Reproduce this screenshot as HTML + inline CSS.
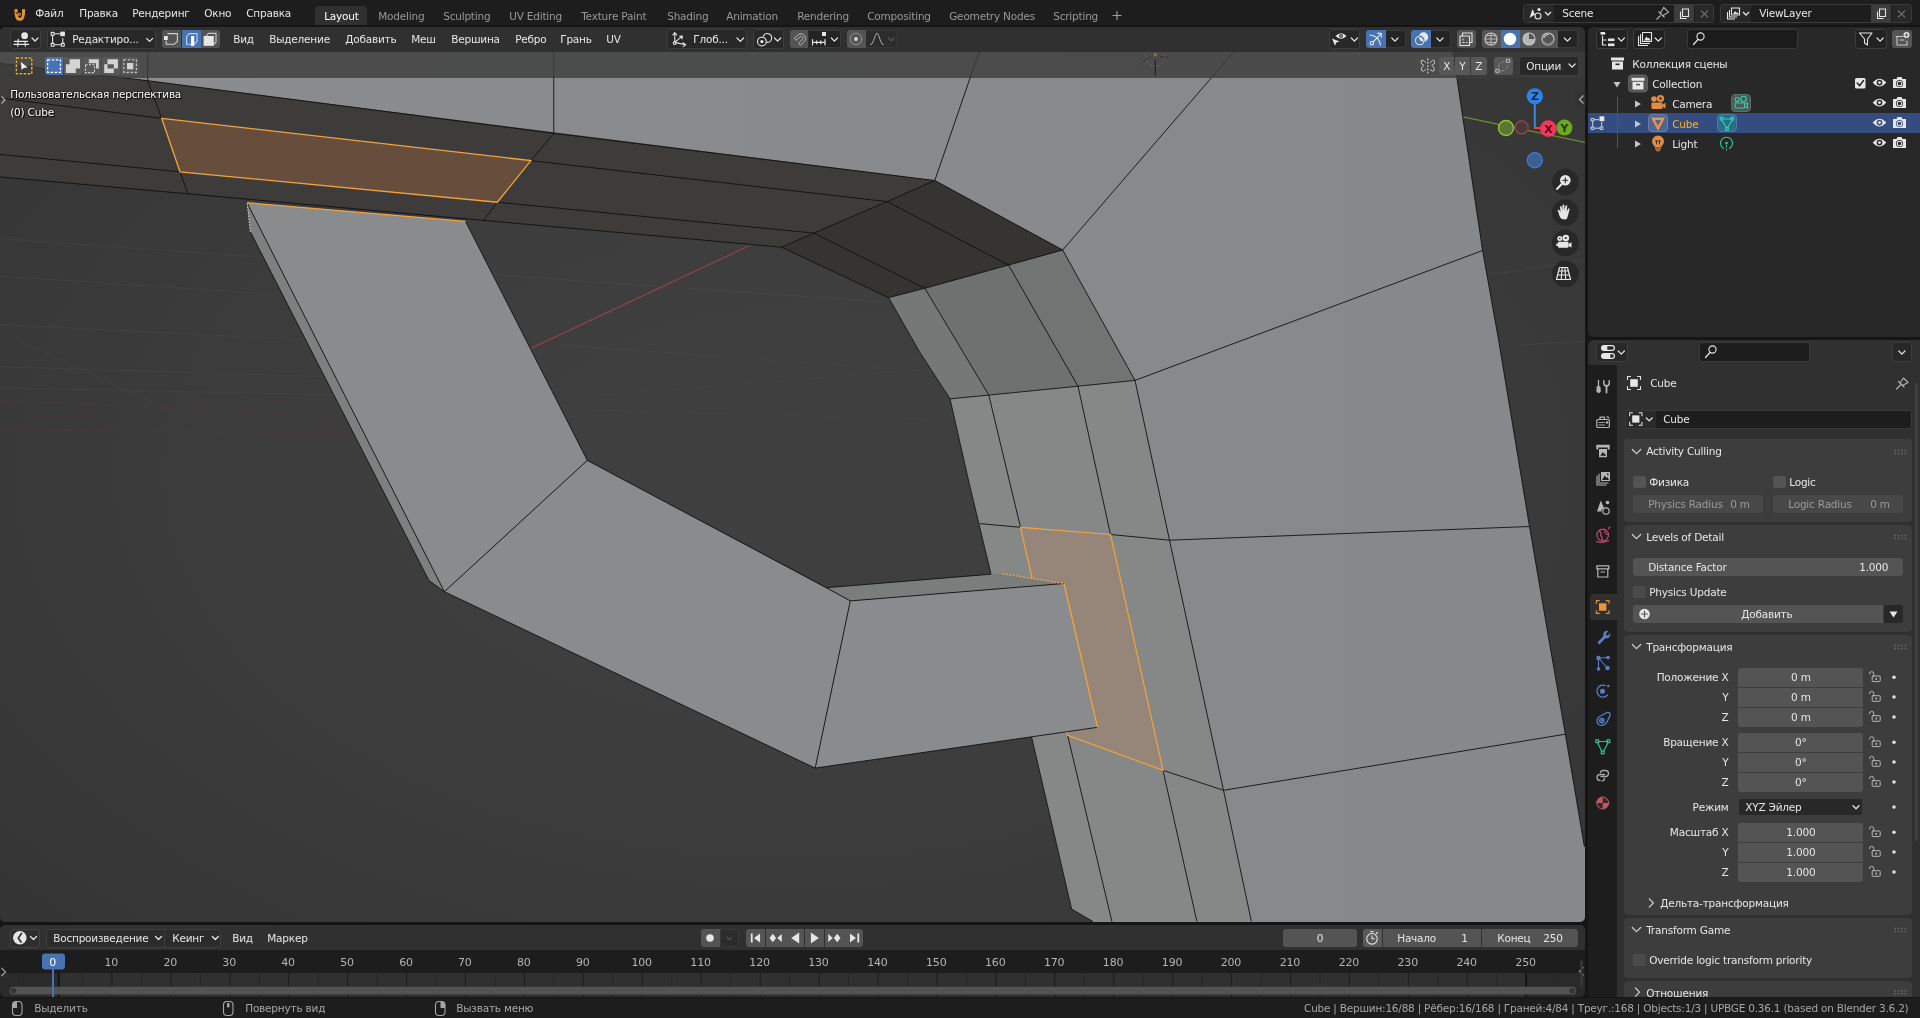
<!DOCTYPE html>
<html lang="ru">
<head>
<meta charset="utf-8">
<title>UPBGE</title>
<style>
*{box-sizing:border-box;margin:0;padding:0}
html,body{width:1920px;height:1018px;overflow:hidden;background:#151515}
body{font-family:"DejaVu Sans","Liberation Sans",sans-serif;font-size:10.5px;letter-spacing:-0.2px;color:#e6e6e6;position:relative;line-height:1}
.a{position:absolute}
.t{position:absolute;white-space:nowrap;line-height:14px;height:14px;padding-left:0.7px}
.dim{color:#989898}
.b{position:absolute;border-radius:3px}
svg{position:absolute;left:0;top:0;overflow:visible}
</style>
</head>
<body>
<div id="root" style="position:absolute;left:0;top:0;width:1920px;height:1018px;will-change:transform">
<svg width="1920" height="1018" viewBox="0 0 1920 1018">
<defs>
<clipPath id="vp"><rect x="0" y="28" width="1585" height="894" rx="5" ry="5"/></clipPath>
<radialGradient id="bgv" gradientUnits="userSpaceOnUse" cx="792" cy="475" r="1" gradientTransform="translate(792,475) scale(1050,640) translate(-792,-475)"><stop offset="0" stop-color="#404040"/><stop offset="0.5" stop-color="#3d3d3d"/><stop offset="1" stop-color="#353535"/></radialGradient>
<linearGradient id="lg" x1="0" y1="0" x2="1" y2="0"><stop offset="0" stop-color="#8b8c8d"/><stop offset="1" stop-color="#87888a"/></linearGradient>
</defs>
<g clip-path="url(#vp)">
<rect x="0" y="28" width="1585" height="894" fill="url(#bgv)"/>
<!-- faint grid -->
<g stroke="#454545" stroke-width="1" fill="none" opacity="0.7">
<path d="M0 238.700 L259 257 L300 260"/><path d="M0 276 L360 300"/><path d="M0 324.500 L309 340"/><path d="M0 366.700 L323 376.600"/><path d="M0 387.800 L337 394.800"/><path d="M17 340 L225 435.600"/>
<path d="M470 273.200 L885 302"/><path d="M560 345 L935 372"/><path d="M600 395 L948 368"/><path d="M590 410 L955 420"/>
<path d="M1489 275 L1585 260"/><path d="M1520 345 L1585 341"/><path d="M1560 905 L1585 902"/>
</g>
<g stroke="#4a3a3e" stroke-width="1" fill="none" opacity="0.7"><path d="M0 400 L351 418"/><path d="M0 430 L351 432.800"/><path d="M380 395 L345 410"/></g>
<!-- mid gray face behind top-left -->
<!-- main body -->
<polygon points="0,28 0,63.3 147.7,80.7 934.8,180.5 1062.7,250 1008.5,265 924.8,288.3 888.6,297.6 919,351 950,398.8 968.4,480 991,574.2 1031.6,737 1071.6,909 1092.9,921.5 1092.9,930 1590,930 1590,846.7 1584.4,846.7 1565.4,734.2 1549,640 1529.5,526.5 1498.6,340 1482.6,250.5 1456.8,77.2 1449.5,28" fill="url(#lg)"/>
<!-- mid gray bevel quads -->
<polygon points="888.6,297.6 924.8,288.3 988.8,395.1 950,398.8 919,351" fill="#767777"/>
<polygon points="924.8,288.3 1008.5,265 1040,320 1078,386.2 988.8,395.1" fill="#6f7070"/>
<polygon points="1008.5,265 1062.7,250 1135,380.4 1078,386.2 1040,320" fill="#727373"/>
<!-- lower strips slight tint -->
<polygon points="950,398.8 1135,380.4 1169.5,540.2 1223.5,790.3 1251.4,921.5 1092.9,921.5 1071.6,909 1031.6,737 991,574.2 968.4,480" fill="#868888"/>
<!-- dark band -->
<polygon points="0,63.3 147.7,80.7 553.75,133.3 934.8,180.5 887,201.6 813.9,233.1 781.6,247.2 187.9,193.8 0,176.9" fill="#3d3c3a"/>
<!-- dark corner -->
<polygon points="934.8,180.5 1062.7,250 1008.5,265 924.8,288.3 888.6,297.6 781.6,247.2 813.9,233.1 887,201.6" fill="#353433"/>
<!-- red X axis -->
<line x1="750.6" y1="245" x2="531" y2="348.4" stroke="#8e3f4c" stroke-width="1.3"/>
<!-- green Y axis -->
<line x1="1463" y1="116.900" x2="1585" y2="142.400" stroke="#6b8f2b" stroke-width="1.3"/>
<!-- selected face top -->
<polygon points="161.7,118.4 530.9,160.6 497.3,202.2 180,171.8" fill="#664d3c"/>
<!-- band edges -->
<g stroke="#111" stroke-width="0.9" fill="none" stroke-linejoin="round">
<path d="M0 63.3 L147.7 80.7 L553.75 133.3 L934.8 180.5"/>
<path d="M0 98.1 L161.7 118.4"/><path d="M530.9 160.6 L887 201.6"/>
<path d="M0 154.4 L180 171.8"/><path d="M497.3 202.2 L813.9 233.1"/>
<path d="M0 176.9 L187.9 193.8 L781.6 247.2"/>
<path d="M147.7 28 L147.7 80.7 L161.7 118.4"/><path d="M180 171.8 L187.9 193.8"/>
<path d="M553.75 28 L553.75 133.3 L530.9 160.6"/><path d="M497.3 202.2 L483.3 220.8"/>
<path d="M934.8 180.5 L887 201.6 L813.9 233.1 L781.6 247.2"/>
<path d="M934.8 180.5 L972.8 70 L988 28"/>
<path d="M934.8 180.5 L1062.7 250 L1211.9 77.2 L1254.4 28"/>
<path d="M887 201.6 L1008.5 265"/><path d="M813.9 233.1 L924.8 288.3"/><path d="M781.6 247.2 L888.6 297.6"/>
<path d="M888.6 297.6 L924.8 288.3 L1008.5 265 L1062.7 250"/>
<path d="M888.6 297.6 L919 351 L950 398.8 L968.4 480 L991 574.2"/>
<path d="M924.8 288.3 L988.8 395.1 L1020.5 527.3"/>
<path d="M1008.5 265 L1040 320 L1078 386.2 L1110.5 534.5"/>
<path d="M1062.7 250 L1135 380.4 L1169.5 540.2 L1223.5 790.3 L1251.4 921.5"/>
<path d="M950 398.8 L988.8 395.1 L1078 386.2 L1135 380.4 L1482.6 250.5"/>
<path d="M979.7 523.6 L1020.5 527.3"/><path d="M1110.5 534.5 L1169.5 540.2 L1529.5 526.5"/>
<path d="M1163 770.3 L1223.5 790.3 L1565.4 734.2"/>
<path d="M1163 770.3 L1196.9 921.5"/><path d="M1067.6 735.2 L1111.9 921.5"/>
<path d="M1031.6 737 L1071.6 909 L1092.9 921.5"/>
<path d="M1449.5 28 L1456.8 77.2 L1482.6 250.5 L1498.6 340 L1529.5 526.5 L1549 640 L1565.4 734.2 L1584.4 846.7"/>
</g>
<!-- selected face lower -->
<polygon points="1020.5,527.3 1110.5,534.5 1163,770.3 1067.6,735.2" fill="#958679" stroke="#f2a43a" stroke-width="1.200"/>
<!-- plank 1 -->
<polygon points="247,202.7 250.3,231.7 428.9,580.5 444.4,591.7" fill="#7e7f7f"/>
<polygon points="247,202.7 465.5,221.3 587.3,460.4 444.4,591.7" fill="#8a8b8c"/>
<!-- plank 2 -->
<polygon points="444.4,591.7 587.3,460.4 850.3,600.9 815.2,768.1" fill="#8a8b8c"/>
<!-- plank 3 -->
<polygon points="826.4,587.7 991,574.2 1002.2,573.7 1064,583.5 850.3,600.9" fill="#7b7c7c"/>
<polygon points="850.3,600.9 1064,583.5 1097.5,727.3 815.2,768.1" fill="#8a8b8c"/>
<g stroke="#111" stroke-width="0.9" fill="none" stroke-linejoin="round">
<path d="M250.3 231.7 L428.9 580.5 L444.4 591.7 L815.2 768.1 L1097.5 727.3"/>
<path d="M247 202.7 L444.4 591.7 L587.3 460.4 L465.5 221.3"/>
<path d="M587.3 460.4 L826.4 587.7 L850.3 600.9 L815.2 768.1"/>
<path d="M826.4 587.7 L991 574.2"/><path d="M850.3 600.9 L1064 583.5"/>
</g>
<g stroke="#f2a43a" stroke-width="1.300" fill="none">
<polygon points="161.7,118.4 530.9,160.6 497.3,202.2 180,171.8"/>
<path d="M247 202.7 L465.5 221.3"/>
<path d="M1064 583.5 L1097.5 727.3"/>
<path d="M1002.2 573.7 L1064 583.5" stroke-dasharray="2 1.5"/>
</g>
<path d="M247.3 203.5 L250.3 231.7" stroke="#ddd" stroke-width="1" stroke-dasharray="1.5 1.5"/>
</g>
</svg>

<div class="a" style="left:0;top:0;width:1920px;height:25px;background:#1d1d1d"></div>
<svg width="40" height="28" viewBox="0 0 40 28"><path d="M15.900 9.200 L16.300 14.500 Q16.800 19.300 19.800 19.300 Q22.800 19.300 23.300 14.500 L23.700 9.200" stroke="#e8912e" stroke-width="3.100" fill="none" stroke-linecap="butt"/><path d="M15 12.300 L18 14.800 L19.300 17.800 L21.800 16.500 L21.300 11.500 L19 13" fill="#1d1d1d"/><circle cx="19.300" cy="14.300" r="1.500" fill="#e8a050"/><circle cx="19.300" cy="14.300" r="0.600" fill="#1d1d1d"/></svg>
<div class="t" style="left:34.5px;top:6px">Файл</div>
<div class="t" style="left:78.5px;top:6px">Правка</div>
<div class="t" style="left:131.5px;top:6px">Рендеринг</div>
<div class="t" style="left:203.5px;top:6px">Окно</div>
<div class="t" style="left:245.5px;top:6px">Справка</div>
<div class="a" style="left:315px;top:6px;width:52px;height:19px;background:#303030;border-radius:4px 4px 0 0"></div>
<div class="t" style="left:323.5px;top:9px;color:#fff">Layout</div>
<div class="t dim" style="left:377.5px;top:9px">Modeling</div>
<div class="t dim" style="left:442.5px;top:9px">Sculpting</div>
<div class="t dim" style="left:508.5px;top:9px">UV Editing</div>
<div class="t dim" style="left:580.5px;top:9px">Texture Paint</div>
<div class="t dim" style="left:666.5px;top:9px">Shading</div>
<div class="t dim" style="left:725.5px;top:9px">Animation</div>
<div class="t dim" style="left:796.5px;top:9px">Rendering</div>
<div class="t dim" style="left:866.5px;top:9px">Compositing</div>
<div class="t dim" style="left:948.5px;top:9px">Geometry Nodes</div>
<div class="t dim" style="left:1052.5px;top:9px">Scripting</div>
<svg width="1920" height="28" viewBox="0 0 1920 28"><path d="M1112.5 15.5 H1121.5 M1117 11 V20" stroke="#a0a0a0" stroke-width="1.1" fill="none"/></svg>
<!-- scene selector -->
<div class="b" style="left:1523px;top:4px;width:191px;height:19px;background:#1d1d1d;border:1px solid #3a3a3a"></div>
<div class="a" style="left:1524px;top:5px;width:30px;height:17px;background:#282828;border-radius:3px 0 0 3px"></div>
<div class="a" style="left:1674px;top:5px;width:20px;height:17px;background:#3d3d3d"></div>
<div class="a" style="left:1695px;top:5px;width:18px;height:17px;background:#282828;border-radius:0 3px 3px 0"></div>
<div class="t" style="left:1561.5px;top:6px">Scene</div>
<div class="b" style="left:1720px;top:4px;width:192px;height:19px;background:#1d1d1d;border:1px solid #3a3a3a"></div>
<div class="a" style="left:1721px;top:5px;width:30px;height:17px;background:#282828;border-radius:3px 0 0 3px"></div>
<div class="a" style="left:1871px;top:5px;width:20px;height:17px;background:#3d3d3d"></div>
<div class="a" style="left:1892px;top:5px;width:19px;height:17px;background:#282828;border-radius:0 3px 3px 0"></div>
<div class="t" style="left:1758.5px;top:6px">ViewLayer</div>
<svg width="1920" height="28" viewBox="0 0 1920 28" fill="none" stroke="#e6e6e6" stroke-width="1.1">
<!-- scene icon -->
<path d="M1529.5 18 L1532.5 9 L1535 14.5 Z" fill="#e6e6e6" stroke="none"/><circle cx="1538" cy="16" r="3"/><circle cx="1539" cy="9.5" r="1.6" fill="#e6e6e6" stroke="none"/>
<path d="M1545 12 L1548 15 L1551 12" stroke-width="1.3"/>
<!-- pin -->
<path d="M1656.500 19.500 L1660.500 15.500 M1658.500 11.500 L1664.500 17.500 M1660.300 13.300 L1663.800 7.500 L1668.500 12.200 L1662.700 15.700" stroke="#b0b0b0"/>
<!-- new scene -->
<path d="M1680.5 11.5 V18.5 H1686.5 M1682.5 9 H1688.5 V16.5 H1682.5 Z" stroke="#e6e6e6"/>
<path d="M1701 10.5 L1708 17.5 M1708 10.5 L1701 17.5" stroke="#6a6a6a" stroke-width="1.3"/>
<!-- view layer icon -->
<path d="M1727.5 12 V19 H1735 M1729.5 10 V17 H1737 M1731.5 8 H1739.5 V15 H1731.5 Z"/><path d="M1733 14 L1735 11 L1736.5 13 L1737.5 12 L1738.5 14 Z" fill="#e6e6e6" stroke="none"/>
<path d="M1743 12 L1746 15 L1749 12" stroke-width="1.3"/>
<path d="M1877.5 11.5 V18.5 H1883.5 M1879.5 9 H1885.5 V16.5 H1879.5 Z" stroke="#e6e6e6"/>
<path d="M1898 10.5 L1905 17.5 M1905 10.5 L1898 17.5" stroke="#6a6a6a" stroke-width="1.3"/>
</svg>

<!-- viewport header row -->
<div class="a" style="left:0;top:27px;width:1585px;height:25px;background:#303030;border-radius:5px 5px 0 0"></div>
<!-- tool settings row (translucent) -->
<div class="a" style="left:0;top:52px;width:1585px;height:26px;background:rgba(60,60,60,0.8)"></div>
<!-- editor type -->
<div class="b" style="left:9.500px;top:29px;width:31px;height:20px;background:#2a2a2a;border:1px solid #3f3f3f"></div>
<!-- mode -->
<div class="b" style="left:47px;top:29px;width:109px;height:20px;background:#282828;border:1px solid #3d3d3d"></div>
<div class="t" style="left:71.5px;top:32px">Редактиро...</div>
<!-- select modes -->
<div class="a" style="left:162px;top:30px;width:19px;height:18px;background:#545454;border-radius:3px 0 0 3px"></div>
<div class="a" style="left:181.5px;top:30px;width:19px;height:18px;background:#4772b3"></div>
<div class="a" style="left:201px;top:30px;width:19px;height:18px;background:#545454;border-radius:0 3px 3px 0"></div>
<div class="t" style="left:232.5px;top:32px">Вид</div>
<div class="t" style="left:268.5px;top:32px">Выделение</div>
<div class="t" style="left:344.5px;top:32px">Добавить</div>
<div class="t" style="left:410.5px;top:32px">Меш</div>
<div class="t" style="left:450.5px;top:32px">Вершина</div>
<div class="t" style="left:514.5px;top:32px">Ребро</div>
<div class="t" style="left:559.5px;top:32px">Грань</div>
<div class="t" style="left:605.5px;top:32px">UV</div>
<!-- orientation -->
<div class="b" style="left:667px;top:29px;width:80px;height:20px;background:#282828;border:1px solid #3d3d3d"></div>
<div class="t" style="left:692.5px;top:32px">Глоб...</div>
<!-- pivot -->
<div class="b" style="left:753px;top:29px;width:31px;height:20px;background:#282828;border:1px solid #3d3d3d"></div>
<!-- snap -->
<div class="a" style="left:790px;top:30px;width:18px;height:18px;background:#545454;border-radius:3px 0 0 3px"></div>
<div class="a" style="left:808.500px;top:30px;width:32px;height:18px;background:#242424;border:1px solid #3a3a3a;border-left:none;border-radius:0 3px 3px 0"></div>
<!-- proportional -->
<div class="a" style="left:847px;top:30px;width:19px;height:18px;background:#545454;border-radius:3px 0 0 3px"></div>
<div class="a" style="left:866px;top:30px;width:31px;height:18px;background:#2c2c2c;border:1px solid #363636;border-left:none;border-radius:0 3px 3px 0"></div>
<!-- right side -->
<div class="b" style="left:1329px;top:29px;width:31px;height:20px;background:#282828;border:1px solid #3d3d3d"></div>
<div class="a" style="left:1366px;top:30px;width:20px;height:18px;background:#4772b3;border-radius:3px 0 0 3px"></div>
<div class="a" style="left:1386px;top:30px;width:19.500px;height:18px;background:#242424;border:1px solid #3a3a3a;border-left:none;border-radius:0 3px 3px 0"></div>
<div class="a" style="left:1411px;top:30px;width:20px;height:18px;background:#4772b3;border-radius:3px 0 0 3px"></div>
<div class="a" style="left:1431px;top:30px;width:19.500px;height:18px;background:#242424;border:1px solid #3a3a3a;border-left:none;border-radius:0 3px 3px 0"></div>
<div class="b" style="left:1457px;top:30px;width:19px;height:18px;background:#545454"></div>
<div class="a" style="left:1482px;top:30px;width:18.5px;height:18px;background:#545454;border-radius:3px 0 0 3px"></div>
<div class="a" style="left:1501px;top:30px;width:18.5px;height:18px;background:#4772b3"></div>
<div class="a" style="left:1520px;top:30px;width:18.5px;height:18px;background:#545454"></div>
<div class="a" style="left:1539px;top:30px;width:18.500px;height:18px;background:#545454"></div>
<div class="a" style="left:1557.500px;top:30px;width:20px;height:18px;background:#242424;border:1px solid #3a3a3a;border-left:none;border-radius:0 3px 3px 0"></div>
<!-- tool row buttons -->
<div class="a" style="left:44.5px;top:57px;width:18.5px;height:17.5px;background:#4772b3;border-radius:3px 0 0 3px"></div>
<div class="a" style="left:63.5px;top:57px;width:18.5px;height:17.5px;background:#585858"></div>
<div class="a" style="left:82.5px;top:57px;width:18.5px;height:17.5px;background:#585858"></div>
<div class="a" style="left:101.5px;top:57px;width:18.5px;height:17.5px;background:#585858"></div>
<div class="a" style="left:120.5px;top:57px;width:18.5px;height:17.5px;background:#585858;border-radius:0 3px 3px 0"></div>
<div class="a" style="left:1438.5px;top:57px;width:15.5px;height:18px;background:#585858;border-radius:3px 0 0 3px"></div>
<div class="a" style="left:1454.5px;top:57px;width:15.5px;height:18px;background:#585858"></div>
<div class="a" style="left:1470.5px;top:57px;width:16px;height:18px;background:#585858;border-radius:0 3px 3px 0"></div>
<div class="t" style="left:1442.5px;top:59px">X</div>
<div class="t" style="left:1458.5px;top:59px">Y</div>
<div class="t" style="left:1474.5px;top:59px">Z</div>
<div class="b" style="left:1493.5px;top:57px;width:19px;height:18px;background:#585858"></div>
<div class="b" style="left:1518.5px;top:56px;width:60px;height:20px;background:#282828;border:1px solid #3d3d3d"></div>
<div class="t" style="left:1525.5px;top:59px">Опции</div>
<svg width="1600" height="300" viewBox="0 0 1600 300" fill="none">
<g font-family="DejaVu Sans, Liberation Sans, sans-serif" font-weight="bold" font-size="11px" text-anchor="middle">
<circle cx="1506" cy="128" r="7.500" fill="#5c7434" stroke="#8fc62c" stroke-width="1.400"/>
<circle cx="1521.700" cy="127.400" r="6.500" fill="#4a393c" stroke="#a8424f" stroke-width="1.200"/>
<circle cx="1534.800" cy="160.300" r="7.500" fill="#3c5e90" stroke="#3b7bd6" stroke-width="1.400"/>
<path d="M1534.800 104 V128" stroke="#3a86e2" stroke-width="2"/>
<path d="M1534 128 H1541" stroke="#f03a58" stroke-width="2"/>
<circle cx="1534.800" cy="96.300" r="8.100" fill="#2f83e6"/>
<text x="1534.800" y="100.300" fill="#0d2a4a">Z</text>
<circle cx="1564.400" cy="127.600" r="8" fill="#6da81e"/>
<text x="1564.400" y="131.600" fill="#1e3a06">Y</text>
<circle cx="1548.300" cy="128.600" r="8.300" fill="#f5365a"/>
<text x="1548.300" y="132.600" fill="#4a0a18">X</text>
</g>
<!-- nav buttons -->
<g fill="#262626" opacity="0.85"><circle cx="1565.400" cy="182" r="13.300"/><circle cx="1565.400" cy="212.500" r="13.300"/><circle cx="1565.400" cy="243" r="13.300"/><circle cx="1565.400" cy="273.800" r="13.300"/></g>
<g stroke="#e6e6e6" stroke-width="1.500" stroke-linecap="round" stroke-linejoin="round">
<circle cx="1565.300" cy="180.300" r="5.300" fill="#e6e6e6" stroke="none"/><path d="M1561.500 184.300 L1557 189"  stroke-width="2"/><path d="M1562.800 180.300 H1567.800 M1565.300 177.800 V182.800" stroke="#262626" stroke-width="1.100"/>
<path d="M1558.500 212.500 Q1557 210 1558 209.500 Q1559.500 209.500 1560.500 212 L1560 206.500 Q1560.800 205.300 1561.600 206.500 L1562.300 210.500 L1562.500 205 Q1563.400 203.800 1564.300 205 L1564.500 210.500 L1565.500 205.800 Q1566.500 204.800 1567.200 206 L1566.700 211.500 L1568.300 208.500 Q1569.500 208 1569.600 209.300 L1568 215.500 Q1567 219.500 1565.400 219.500 Q1560.500 219.500 1559.500 216 Z" fill="#e6e6e6" stroke="none"/>
<g fill="#e6e6e6" stroke="none"><circle cx="1559.800" cy="238.500" r="2.500"/><circle cx="1565.800" cy="238" r="3.300"/><rect x="1558" y="241.800" width="10.500" height="6" rx="1"/><path d="M1568.500 244 L1571.500 242.300 V247.500 L1568.500 246 Z"/><path d="M1556.300 243.500 H1558 V246 H1556.300 Z"/></g><circle cx="1559.800" cy="238.500" r="0.800" fill="#262626" stroke="none"/><circle cx="1565.800" cy="238" r="1.100" fill="#262626" stroke="none"/>
<path d="M1559.500 267.500 H1567.500 L1570.500 279.500 H1556.500 Z M1558.800 271 H1568.300 M1557.800 275 H1569.300 M1562.200 267.500 L1561.200 279.500 M1564.800 267.500 L1565.800 279.500" stroke-width="1.200"/>
</g>
<rect x="1575" y="91" width="11" height="17" rx="3" fill="#303030" opacity="0.500"/>
<path d="M1583.500 95.500 L1579.500 99.500 L1583.500 103.500" stroke="#b0b0b0" stroke-width="1.200"/>
<path d="M1.500 110.500 L5 114 L1.500 117.500" stroke="#b0b0b0" stroke-width="1.200" transform="translate(0,-14)"/>
</svg>

<!-- overlay text -->
<div class="t" style="left:9.5px;top:87px;color:#fff;text-shadow:0 0 2px #000,1px 1px 1px #000">Пользовательская перспектива</div>
<div class="t" style="left:9.5px;top:105px;color:#fff;text-shadow:0 0 2px #000,1px 1px 1px #000">(0) Cube</div>
<svg width="1920" height="80" viewBox="0 0 1920 80" fill="none" stroke="#e6e6e6" stroke-width="1.1" stroke-linecap="round" stroke-linejoin="round">
<!-- editor type -->
<circle cx="24.6" cy="35.7" r="3.4" fill="#e6e6e6" stroke="none"/>
<path d="M14.400 41.300 H27.600 M13.800 44.300 H28.700 M18.300 39.200 L17.700 46.200 M25 41.600 L25.400 46.200" stroke-width="1.150"/>
<path d="M32 38 L35 41 L38 38" stroke-width="1.2"/>
<!-- mode icon -->
<path d="M52.6 35.5 V43 M54.6 33.8 H60 M54.6 44.8 H61 M62.8 38.5 V43"/>
<rect x="51.2" y="32.4" width="2.8" height="2.8"/><rect x="51.2" y="43.4" width="2.8" height="2.8"/><rect x="61.4" y="43.4" width="2.8" height="2.8"/>
<rect x="60.3" y="31.6" width="4.6" height="4.6" fill="#e6e6e6" stroke="none"/>
<path d="M146.5 38.3 L149.6 41.4 L152.7 38.3" stroke-width="1.2"/>
<!-- select modes -->
<path d="M167.8 33.6 H177.4 V41.4 L174.3 44.2 H166.2 V41" stroke="#d0d0d0"/><rect x="164" y="36" width="3.8" height="4" fill="#e6e6e6" stroke="none"/>
<path d="M191 44.2 H186.6 V36.5 L189.3 33.6 H197 V41.4 L194.4 44.2" stroke="#bcd4f5"/><rect x="191" y="36" width="3.2" height="10" fill="#fff" stroke="none"/>
<path d="M207 36 V34.6 L208.5 33.4 H216 V42 L214 44" stroke="#c8c8c8"/><rect x="203.6" y="36" width="10.2" height="9.8" fill="#e6e6e6" stroke="none"/>
<!-- orientation -->
<path d="M674.8 41.5 V33 M672.8 35 L674.8 32.6 L676.8 35 M675.8 42.6 L685.5 44.8 M683 42.8 L685.8 44.9 L683.2 46.6 M675.6 41.6 L682 36.4 M679.5 36.3 L682.4 36 L682 38.8"/>
<circle cx="674.7" cy="43" r="1.4"/>
<path d="M737 38 L740.3 41.3 L743.6 38" stroke-width="1.2"/>
<!-- pivot -->
<circle cx="761.9" cy="41.6" r="4.4"/><circle cx="761.9" cy="41.6" r="1.6" fill="#e6e6e6" stroke="none"/>
<path d="M763.2 36.2 A4.4 4.4 0 1 1 767 42.4"/>
<path d="M774.5 38 L777.6 41.1 L780.7 38" stroke-width="1.2"/>
<!-- magnet -->
<path d="M794.5 38 L799 34.2 A4.6 4.6 0 0 1 804.4 41.4 L800.5 45.3 L798.6 43.2 L802.2 39.7 A1.8 1.8 0 0 0 800.5 36.6 L796.4 40 Z" stroke="#c0c0c0" stroke-width="0.9"/>
<!-- snap increment -->
<path d="M812.5 39.5 V45 M825 39.5 V45 M812.5 42.3 H825 M816.7 40.8 V43.8 M820.8 40.8 V43.8" stroke-width="1.2"/>
<rect x="822" y="32" width="4" height="4" fill="#e6e6e6" stroke="none"/>
<path d="M831.3 38 L834.4 41.1 L837.5 38" stroke-width="1.2"/>
<!-- proportional -->
<circle cx="856" cy="39" r="5.8" stroke="#9a9a9a" stroke-width="0.9"/><circle cx="856" cy="39" r="1.9" fill="#d8d8d8" stroke="none"/>
<path d="M870.5 44.5 C874 44.5 874.5 33.5 877 33.5 C879.5 33.5 880 44.5 883.5 44.5" stroke="#a0a0a0"/>
<path d="M888.5 38 L891.3 40.8 L894.1 38" stroke="#555" stroke-width="1.3"/>
<!-- visibility -->
<path d="M1335.5 36 Q1341 30.5 1346.500 36 Q1341 41.500 1335.500 36 Z" fill="#e6e6e6" stroke="none"/><circle cx="1341" cy="35.800" r="1.9" fill="#282828" stroke="none"/><circle cx="1341" cy="35.800" r="0.800" fill="#e6e6e6" stroke="none"/>
<path d="M1332 38.500 L1339.500 41.500 L1336.300 42.600 L1335 45.800 Z" fill="#e6e6e6" stroke="none"/>
<path d="M1351.300 38 L1354.400 41.100 L1357.500 38" stroke-width="1.2"/>
<!-- gizmo -->
<circle cx="1371.800" cy="43.200" r="1.700"/><path d="M1373 42 L1381 33.800 M1377.500 33.400 L1381.300 33.400 L1381.300 37.200 M1370 35 Q1379 36 1380.500 45"/>
<path d="M1391.800 38 L1394.900 41.100 L1398 38" stroke-width="1.2"/>
<!-- overlay -->
<circle cx="1423.500" cy="37" r="4.700" fill="#e6e6e6" stroke="none"/><circle cx="1419.800" cy="40.500" r="4.300" stroke="#e6e6e6"/><path d="M1419.500 36.300 A4.300 4.300 0 0 1 1424 40.500" stroke="#4772b3" stroke-width="1.2"/>
<path d="M1436.800 38 L1439.900 41.100 L1443 38" stroke-width="1.2"/>
<!-- xray -->
<path d="M1462.500 36 V33 H1472 V42.500 H1469.500"/><rect x="1460" y="36" width="9.500" height="9.500"/><path d="M1463 39 V40 M1463 42.500 H1464.200 M1466.300 42.500 H1467" stroke-width="1"/>
<!-- shading -->
<circle cx="1491" cy="39" r="6" stroke="#c4c4c4"/><path d="M1485 39 H1497 M1491 33 V45 M1486 36 Q1491 34.500 1496 36 M1486 42 Q1491 43.500 1496 42" stroke="#c4c4c4" stroke-width="0.9"/>
<circle cx="1510" cy="39" r="6.200" fill="#fff" stroke="none"/>
<circle cx="1529" cy="39" r="6" stroke="#c8c8c8"/><path d="M1529 33 A6 6 0 0 0 1529 45 Z M1529 39 H1535 A6 6 0 0 1 1529 45 Z" fill="#c8c8c8" stroke="none" opacity="0.850"/>
<circle cx="1548" cy="39" r="6" stroke="#c8c8c8"/><path d="M1544 37.500 A4.500 4.500 0 0 1 1548.500 34.500" stroke="#c8c8c8"/><path d="M1543.500 42 A5.500 5.500 0 0 0 1553 41.500" stroke="#8a8a8a" stroke-width="2"/>
<path d="M1564.300 38 L1567.400 41.100 L1570.500 38" stroke-width="1.2"/>
<!-- tweak tool -->
<rect x="16.400" y="57.900" width="15.400" height="15.900" stroke="#4a3406" stroke-width="2.800" stroke-dasharray="3 1.100" stroke-dashoffset="0.200" stroke-linecap="butt" opacity="0.750"/><rect x="16.400" y="57.900" width="15.400" height="15.900" stroke="#d0b56c" stroke-width="1.500" stroke-dasharray="2.600 1.500" stroke-linecap="butt"/>
<path d="M21 62 L27.600 67.600 L23.800 67.900 L21.500 70 Z" fill="#f4f4f4" stroke="none"/>
<!-- select box modes -->
<rect x="47.600" y="59.800" width="12.800" height="12.600" stroke="#fff" stroke-width="1.300" stroke-dasharray="2.500 1.600" stroke-linecap="butt"/>
<path d="M69.600 59.300 H80 V68.400 H75.800 V73 H65.800 V64.300 H69.600 Z" fill="#d4d4d4" stroke="none"/>
<path d="M88.800 59.300 H98.800 V68.400 H96 V63.300 H88.800 Z" fill="#d4d4d4" stroke="none"/><rect x="85.500" y="64.800" width="9" height="7.800" stroke="#d4d4d4" stroke-width="1.100" stroke-dasharray="2 1.500" stroke-linecap="butt"/>
<path d="M107.500 59.300 H117.900 V68.400 H113.800 V73 H104.200 V64.300 H107.500 Z M107.500 64.300 V68.400 H113.800 V64.300 Z" fill="#d4d4d4" fill-rule="evenodd" stroke="none"/>
<rect x="123.800" y="59.800" width="12.600" height="12.600" stroke="#c8c8c8" stroke-width="1.100" stroke-dasharray="2.400 1.700" stroke-linecap="butt"/><rect x="127" y="63" width="6.300" height="6.300" fill="#d4d4d4" stroke="none"/>
<!-- mirror -->
<path d="M1427.800 58.500 V73.500" stroke="#e6e6e6" stroke-width="1" stroke-dasharray="2 1.300" stroke-linecap="butt"/>
<path d="M1425.500 62.500 Q1422.500 58.500 1421 61 Q1420.500 64.500 1424 65.500 Q1420.500 67 1421.500 70.500 Q1423.500 72.500 1425.500 69.500 M1430.200 62.500 Q1433.200 58.500 1434.700 61 Q1435.200 64.500 1431.700 65.500 Q1435.200 67 1434.200 70.500 Q1432.200 72.500 1430.200 69.500" stroke="#c4c4c4" stroke-width="1"/>
<!-- automerge -->
<rect x="1506.800" y="59.300" width="3" height="3" stroke="#c8c8c8" stroke-width="0.9"/><rect x="1496.200" y="69.300" width="3" height="3" stroke="#c8c8c8" stroke-width="0.9"/>
<path d="M1498.500 67 Q1499 62 1504.500 61.500 M1501.500 71 Q1507.500 70.500 1508 64.500" stroke="#8c8c8c" stroke-width="1" stroke-dasharray="2 1.500"/>
<path d="M1569 64 L1572.100 67.100 L1575.200 64" stroke-width="1.200"/>
<!-- light object in viewport -->
<clipPath id="lclip"><rect x="1100" y="52" width="120" height="40"/></clipPath>
<g clip-path="url(#lclip)"><g stroke="#a87068" stroke-width="0.9" opacity="0.55"><circle cx="1155.300" cy="54.800" r="1.700" fill="#c8903c" stroke="none"/><circle cx="1155.300" cy="56.300" r="9.800" stroke-dasharray="2.500 3.500"/><path d="M1143 61.500 L1151 56.500 M1160.500 56.500 L1168 57.500" stroke="#1a1a1a" stroke-dasharray="2 1.500"/></g>
<path d="M1155.300 60 V75.500" stroke="#1c1c1c" stroke-width="1"/></g>
</svg>


<!-- outliner -->
<div class="a" style="left:1588px;top:27px;width:332px;height:310px;background:#282828;border-radius:5px 0 0 5px"></div>
<div class="a" style="left:1588px;top:27px;width:332px;height:25px;background:#282828;border-radius:5px 0 0 0"></div>
<div class="b" style="left:1596px;top:29px;width:32px;height:20px;background:#222222;border:1px solid #3d3d3d"></div>
<div class="b" style="left:1633px;top:29px;width:32px;height:20px;background:#222222;border:1px solid #3d3d3d"></div>
<div class="b" style="left:1687px;top:29px;width:111px;height:20px;background:#1b1b1b;border:1px solid #383838"></div>
<div class="b" style="left:1855px;top:29px;width:32px;height:20px;background:#222222;border:1px solid #3d3d3d"></div>
<div class="b" style="left:1892px;top:30px;width:20px;height:18px;background:#545454"></div>
<div class="a" style="left:1588px;top:113px;width:332px;height:20px;background:#334d80"></div>
<div class="t" style="left:1631.500px;top:57px">Коллекция сцены</div>
<div class="t" style="left:1651.500px;top:77px">Collection</div>
<div class="t" style="left:1671.500px;top:97px">Camera</div>
<div class="t" style="left:1671.500px;top:117px;color:#ffaf29">Cube</div>
<div class="t" style="left:1671.500px;top:137px">Light</div>
<svg width="1920" height="340" viewBox="0 0 1920 340" fill="none" stroke="#e6e6e6" stroke-width="1.100" stroke-linecap="round" stroke-linejoin="round">
<!-- header icons -->
<path d="M1601.500 33.500 H1605 M1602.500 36 V45 H1606 M1602.500 40 H1606" stroke-width="1.200"/><rect x="1600.500" y="32" width="4.500" height="2.600" fill="#e6e6e6" stroke="none"/><rect x="1608" y="38.500" width="6.500" height="2.600" fill="#e6e6e6" stroke="none"/><rect x="1608" y="43.500" width="6.500" height="2.600" fill="#e6e6e6" stroke="none"/>
<path d="M1618.200 38 L1621.300 41.100 L1624.400 38" stroke-width="1.200"/>
<path d="M1638.500 36.500 V45.500 H1647.500 M1640.500 34.500 V43.500 H1649.500 M1642.500 32.500 H1651.500 V41.500 H1642.500 Z"/><path d="M1644 40.500 L1646.500 36.500 L1648 38.500 L1649 37.500 L1650.500 40.500 Z" fill="#e6e6e6" stroke="none"/>
<path d="M1655.200 38 L1658.300 41.100 L1661.400 38" stroke-width="1.200"/>
<circle cx="1700.500" cy="36.500" r="3.600"/><path d="M1698 39.500 L1693.500 44.500" stroke-width="1.200"/>
<path d="M1859.500 33 H1872 L1867.500 39 V45 L1864.500 43 V39 Z"/>
<path d="M1877 38 L1880.100 41.100 L1883.200 38" stroke-width="1.200"/>
<path d="M1896 36.500 H1903 M1897 36.500 V45 H1907 V41 M1900 40 H1904" stroke="#c8c8c8"/><circle cx="1906.500" cy="35" r="3" fill="#e6e6e6" stroke="none"/><path d="M1905 35 H1908 M1906.500 33.500 V36.500" stroke="#545454" stroke-width="0.900"/>
<!-- scene collection icon -->
<rect x="1611" y="57.500" width="13" height="3" fill="#e6e6e6" stroke="none"/><path d="M1612 61.500 H1623 V69.500 H1612 Z" fill="#e6e6e6" stroke="none"/><rect x="1615.500" y="63.500" width="4" height="1.600" fill="#282828" stroke="none"/>
<!-- collection -->
<path d="M1613.500 82 H1620.500 L1617 87.500 Z" fill="#c4c4c4" stroke="none"/>
<rect x="1628.500" y="75" width="19" height="17" rx="3.500" fill="#545454" stroke="#6a6a6a" stroke-width="0.800"/>
<rect x="1631.500" y="77.800" width="13" height="3" fill="#e6e6e6" stroke="none"/><path d="M1632.500 81.800 H1643.500 V89.500 H1632.500 Z" fill="#e6e6e6" stroke="none"/><rect x="1636" y="83.800" width="4" height="1.600" fill="#545454" stroke="none"/>
<!-- tree line -->
<path d="M1617.500 97 V148" stroke="#555" stroke-width="1"/>
<!-- arrows -->
<path d="M1635 100.500 L1641 104 L1635 107.500 Z M1635 120.500 L1641 124 L1635 127.500 Z M1635 140.500 L1641 144 L1635 147.500 Z" fill="#c4c4c4" stroke="none"/>
<!-- camera icon orange -->
<g fill="#e08c44" stroke="none"><circle cx="1654" cy="99" r="2.800"/><circle cx="1660.500" cy="98.500" r="3.600"/><rect x="1651.500" y="102.500" width="11" height="6.500" rx="1"/><path d="M1662.500 104.500 L1665.500 102.800 V108.500 L1662.500 107 Z"/></g><circle cx="1660.500" cy="98.500" r="1.200" fill="#282828" stroke="none"/>
<!-- cube mesh icon (selected, orange triangle) -->
<rect x="1648.500" y="114.500" width="19" height="17" rx="3.500" fill="#4f6694" stroke="#7488b0" stroke-width="0.800"/>
<path d="M1653 118.800 H1663 L1658 128.300 Z" stroke="#e8944c" stroke-width="2.400" fill="none" stroke-linejoin="miter"/>
<!-- light icon -->
<g fill="#e08c44" stroke="none"><path d="M1652 141.500 A6 6 0 1 1 1664 141.500 Q1664 144.500 1661.500 146 V147.500 H1654.500 V146 Q1652 144.500 1652 141.500 Z"/><rect x="1655" y="148.300" width="6" height="1.200"/><rect x="1656" y="150.200" width="4" height="1"/></g><path d="M1655.500 141 H1660.500 M1656.500 141 V144 M1659.500 141 V144" stroke="#282828" stroke-width="0.900"/>
<!-- data icons -->
<rect x="1731.500" y="94.500" width="19" height="17" rx="3.500" fill="#4a5a55" stroke="#687a74" stroke-width="0.800"/>
<g stroke="#35d0a5" stroke-width="1.100"><circle cx="1737" cy="99.500" r="2"/><circle cx="1743.500" cy="99" r="2.800"/><rect x="1735" y="103" width="9.500" height="5" rx="0.800"/><path d="M1744.500 104.500 L1747.500 103 V108 L1744.500 106.500"/></g>
<rect x="1717.500" y="114.500" width="19" height="17" rx="3.500" fill="#2f6a8a" stroke="#4f86a6" stroke-width="0.800"/>
<g stroke="#25d8b0" stroke-width="1.200"><path d="M1722.500 119 H1731.500 M1722 120.500 L1726.500 127.500 M1732 120.500 L1727.500 127.500"/><rect x="1720.300" y="117.300" width="2.600" height="2.600"/><rect x="1731" y="117.300" width="2.600" height="2.600"/><rect x="1725.700" y="127.500" width="2.600" height="2.600"/></g>
<g stroke="#25c898" stroke-width="1.100"><path d="M1723.500 148.500 A6 6 0 1 1 1729.500 148.500"/><circle cx="1726.500" cy="143" r="0.800" fill="#25c898"/><path d="M1726.500 145 V147 M1726.500 149 V150"/></g>
<!-- mode icon left of cube row -->
<g stroke="#c8d4ea" stroke-width="1"><rect x="1591.500" y="118.500" width="2.400" height="2.400"/><rect x="1591.500" y="127" width="2.400" height="2.400"/><rect x="1600.500" y="127" width="2.400" height="2.400"/><path d="M1592.700 121.500 V126.500 M1594.500 119.700 H1598.500 M1594.500 128.200 H1600 M1601.700 122 V126.500"/></g><rect x="1599.500" y="116.300" width="4.800" height="4.800" fill="#e6e6e6" stroke="none"/>
<!-- checkbox, eyes, cameras -->
<rect x="1855" y="78" width="10.500" height="10.500" rx="1.500" fill="#e6e6e6" stroke="none"/><path d="M1857.200 83 L1859.600 85.800 L1863.500 80.500" stroke="#282828" stroke-width="1.500"/>
</svg>
<svg width="1920" height="340" viewBox="0 0 1920 340">
<defs><g id="eye"><path d="M-6.800 0 Q0 -7.800 6.800 0 Q0 7.800 -6.800 0 Z M2.900 0 A2.900 2.900 0 1 0 -2.900 0 A2.900 2.900 0 1 0 2.900 0 Z" fill="#e6e6e6" fill-rule="evenodd"/><circle cx="0" cy="0" r="1.400" fill="#e6e6e6"/></g>
<g id="cam"><path d="M-6.500 -3.500 H-3 L-2 -5.500 H2 L3 -3.500 H6.500 V5.500 H-6.500 Z M3.600 1 A3.600 3.600 0 1 0 -3.600 1 A3.600 3.600 0 1 0 3.600 1 Z" fill="#e6e6e6" fill-rule="evenodd"/><circle cx="0" cy="1" r="2.300" fill="none" stroke="#e6e6e6" stroke-width="1.100"/></g></defs>
<use href="#eye" x="1879.500" y="82.6"/><use href="#eye" x="1879.500" y="102.6"/><use href="#eye" x="1879.500" y="122.6"/><use href="#eye" x="1879.500" y="142.6"/>
<use href="#cam" x="1899.500" y="82.500"/><use href="#cam" x="1899.500" y="102.500"/><use href="#cam" x="1899.500" y="122.500"/><use href="#cam" x="1899.500" y="142.500"/>
</svg>

<!-- properties editor -->
<div class="a" style="left:1588px;top:340px;width:332px;height:657px;background:#303030;border-radius:5px 0 0 5px"></div>
<div class="a" style="left:1588px;top:365px;width:28.500px;height:632px;background:#1d1d1d;border-radius:0 0 0 5px"></div>
<div class="a" style="left:1590px;top:594px;width:26.500px;height:26px;background:#303030;border-radius:4px 0 0 4px"></div>
<div class="b" style="left:1596px;top:342px;width:32px;height:20px;background:#282828;border:1px solid #3d3d3d"></div>
<div class="b" style="left:1699px;top:342px;width:111px;height:20px;background:#1d1d1d;border:1px solid #3a3a3a"></div>
<div class="b" style="left:1892px;top:342px;width:20px;height:20px;background:#282828;border:1px solid #3d3d3d"></div>
<div class="t" style="left:1649.500px;top:376px">Cube</div>
<div class="b" style="left:1625px;top:409.500px;width:287px;height:19px;background:#1d1d1d;border:1px solid #3a3a3a"></div>
<div class="a" style="left:1626px;top:410.500px;width:29.500px;height:17px;background:#2a2a2a;border-radius:3px 0 0 3px"></div>
<div class="t" style="left:1662.500px;top:412px">Cube</div>
<div class="a" style="left:1624px;top:438.5px;width:288px;height:83.0px;background:#3d3d3d;border-radius:4px"></div>
<div class="t" style="left:1645.500px;top:444.0px">Activity Culling</div>
<div class="a" style="left:1624px;top:524.5px;width:288px;height:107.5px;background:#3d3d3d;border-radius:4px"></div>
<div class="t" style="left:1645.500px;top:530.0px">Levels of Detail</div>
<div class="a" style="left:1624px;top:634.5px;width:288px;height:280.0px;background:#3d3d3d;border-radius:4px"></div>
<div class="t" style="left:1645.500px;top:640.0px">Трансформация</div>
<div class="a" style="left:1624px;top:917.5px;width:288px;height:60.0px;background:#3d3d3d;border-radius:4px"></div>
<div class="t" style="left:1645.500px;top:923.0px">Transform Game</div>
<div class="a" style="left:1624px;top:980.500px;width:288px;height:16px;background:#3d3d3d;border-radius:4px 4px 0 0"></div>
<div class="t" style="left:1645.500px;top:986px">Отношения</div>
<div class="a" style="left:1633px;top:475.5px;width:12.500px;height:12.500px;background:#545454;border-radius:2.500px"></div>
<div class="t" style="left:1648.5px;top:474.5px">Физика</div>
<div class="a" style="left:1773px;top:475.5px;width:12.500px;height:12.500px;background:#545454;border-radius:2.500px"></div>
<div class="t" style="left:1788.5px;top:474.5px">Logic</div>
<div class="b" style="left:1633px;top:495px;width:130px;height:18px;background:#484848"></div>
<div class="t" style="left:1647.500px;top:497px;color:#9a9a9a">Physics Radius</div><div class="t" style="left:1729.500px;top:497px;color:#9a9a9a">0 m</div>
<div class="b" style="left:1773px;top:495px;width:130px;height:18px;background:#484848"></div>
<div class="t" style="left:1787.500px;top:497px;color:#9a9a9a">Logic Radius</div><div class="t" style="left:1869.500px;top:497px;color:#9a9a9a">0 m</div>
<div class="b" style="left:1633px;top:558px;width:270px;height:18px;background:#545454"></div>
<div class="t" style="left:1647.500px;top:560px">Distance Factor</div><div class="t" style="left:1858.500px;top:560px">1.000</div>
<div class="a" style="left:1633px;top:585.5px;width:12.500px;height:12.500px;background:#4a4a4a;border-radius:2.500px"></div>
<div class="t" style="left:1648.5px;top:584.5px">Physics Update</div>
<div class="a" style="left:1633px;top:605px;width:250px;height:18px;background:#545454;border-radius:3px 0 0 3px"></div>
<div class="a" style="left:1883.500px;top:605px;width:19.500px;height:18px;background:#282828;border-radius:0 3px 3px 0"></div>
<div class="t" style="left:1740.500px;top:607px">Добавить</div>
<div class="a" style="left:1738px;top:668px;width:125px;height:18.5px;background:#545454;border-radius:3px 3px 0 0"></div>
<div class="t" style="left:1738px;width:125px;text-align:center;top:670.25px">0 m</div>
<div class="t" style="left:1600px;width:128.500px;text-align:right;top:670.25px">Положение X</div>
<div class="a" style="left:1738px;top:687.5px;width:125px;height:19px;background:#545454;border-radius:0"></div>
<div class="t" style="left:1738px;width:125px;text-align:center;top:690.0px">0 m</div>
<div class="t" style="left:1600px;width:128.500px;text-align:right;top:690.0px">Y</div>
<div class="a" style="left:1738px;top:707.5px;width:125px;height:19px;background:#545454;border-radius:0 0 3px 3px"></div>
<div class="t" style="left:1738px;width:125px;text-align:center;top:710.0px">0 m</div>
<div class="t" style="left:1600px;width:128.500px;text-align:right;top:710.0px">Z</div>
<div class="a" style="left:1738px;top:733px;width:125px;height:18.5px;background:#545454;border-radius:3px 3px 0 0"></div>
<div class="t" style="left:1738px;width:125px;text-align:center;top:735.25px">0°</div>
<div class="t" style="left:1600px;width:128.500px;text-align:right;top:735.25px">Вращение X</div>
<div class="a" style="left:1738px;top:752.5px;width:125px;height:19px;background:#545454;border-radius:0"></div>
<div class="t" style="left:1738px;width:125px;text-align:center;top:755.0px">0°</div>
<div class="t" style="left:1600px;width:128.500px;text-align:right;top:755.0px">Y</div>
<div class="a" style="left:1738px;top:772.5px;width:125px;height:19px;background:#545454;border-radius:0 0 3px 3px"></div>
<div class="t" style="left:1738px;width:125px;text-align:center;top:775.0px">0°</div>
<div class="t" style="left:1600px;width:128.500px;text-align:right;top:775.0px">Z</div>
<div class="b" style="left:1738px;top:798px;width:125px;height:18px;background:#282828;border:1px solid #3d3d3d"></div>
<div class="t" style="left:1744.500px;top:800px">XYZ Эйлер</div>
<div class="t" style="left:1600px;width:128.500px;text-align:right;top:800px">Режим</div>
<div class="a" style="left:1738px;top:823px;width:125px;height:18.5px;background:#545454;border-radius:3px 3px 0 0"></div>
<div class="t" style="left:1738px;width:125px;text-align:center;top:825.25px">1.000</div>
<div class="t" style="left:1600px;width:128.500px;text-align:right;top:825.25px">Масштаб X</div>
<div class="a" style="left:1738px;top:842.5px;width:125px;height:19px;background:#545454;border-radius:0"></div>
<div class="t" style="left:1738px;width:125px;text-align:center;top:845.0px">1.000</div>
<div class="t" style="left:1600px;width:128.500px;text-align:right;top:845.0px">Y</div>
<div class="a" style="left:1738px;top:862.5px;width:125px;height:19px;background:#545454;border-radius:0 0 3px 3px"></div>
<div class="t" style="left:1738px;width:125px;text-align:center;top:865.0px">1.000</div>
<div class="t" style="left:1600px;width:128.500px;text-align:right;top:865.0px">Z</div>
<div class="t" style="left:1659.500px;top:896px">Дельта-трансформация</div>
<div class="a" style="left:1633px;top:953.5px;width:12.500px;height:12.500px;background:#4a4a4a;border-radius:2.500px"></div>
<div class="t" style="left:1648.5px;top:952.5px">Override logic transform priority</div>
<div class="a" style="left:1914.500px;top:383px;width:3px;height:458px;background:#3f3f3f;border-radius:2px"></div>
<svg width="1920" height="1018" viewBox="0 0 1920 1018" fill="none" stroke="#e6e6e6" stroke-width="1.100" stroke-linecap="round" stroke-linejoin="round">
<rect x="1601" y="345" width="14" height="6" rx="3" fill="#e6e6e6" stroke="none"/><path d="M1607.300 346.200 H1612 A1.800 1.800 0 0 1 1612 349.800 H1607.300 Z" fill="#282828" stroke="none"/><rect x="1601" y="353" width="14" height="6" rx="3" fill="#e6e6e6" stroke="none"/><path d="M1610.300 354.200 H1612 A1.800 1.800 0 0 1 1612 357.800 H1610.300 Z" fill="#282828" stroke="none"/>
<path d="M1618.200 351 L1621.300 354.100 L1624.400 351" stroke-width="1.200"/>
<circle cx="1712.500" cy="349.500" r="3.600"/><path d="M1710 352.500 L1705.500 357.500" stroke-width="1.200"/>
<path d="M1898.800 351 L1901.900 354.100 L1905 351" stroke-width="1.200"/>
<g transform="translate(1634,383) scale(1.0)" stroke="#e6e6e6"><rect x="-3.800" y="-3.800" width="7.600" height="7.600" fill="#e6e6e6" stroke="none"/><path d="M-6.500 -3.500 V-6.500 H-3.500 M3.500 -6.500 H6.500 V-3.500 M6.500 3.500 V6.500 H3.500 M-3.500 6.500 H-6.500 V3.500"/></g>
<g transform="translate(1635.8,419) scale(0.95)" stroke="#e6e6e6"><rect x="-3.800" y="-3.800" width="7.600" height="7.600" fill="#e6e6e6" stroke="none"/><path d="M-6.500 -3.500 V-6.500 H-3.500 M3.500 -6.500 H6.500 V-3.500 M6.500 3.500 V6.500 H3.500 M-3.500 6.500 H-6.500 V3.500"/></g>
<path d="M1646.300 418 L1649.200 420.900 L1652.100 418" stroke-width="1.300"/>
<path d="M1896.500 389 L1900.500 385 M1898.500 381.500 L1904 387 M1900 383 L1903.500 378 L1908 382.500 L1902.500 385.500" stroke="#b4b4b4"/>
<path d="M1632.300 449.5 L1636.500 453.7 L1640.700 449.5" stroke="#d0d0d0" stroke-width="1.200"/>
<g fill="#6a6a6a" stroke="none"><rect x="1894.5" y="449.8" width="1.500" height="1.500"/><rect x="1894.5" y="452.8" width="1.500" height="1.500"/><rect x="1897.9" y="449.8" width="1.500" height="1.500"/><rect x="1897.9" y="452.8" width="1.500" height="1.500"/><rect x="1901.3" y="449.8" width="1.500" height="1.500"/><rect x="1901.3" y="452.8" width="1.500" height="1.500"/><rect x="1904.7" y="449.8" width="1.500" height="1.500"/><rect x="1904.7" y="452.8" width="1.500" height="1.500"/></g>
<path d="M1632.300 534.5 L1636.500 538.7 L1640.700 534.5" stroke="#d0d0d0" stroke-width="1.200"/>
<g fill="#6a6a6a" stroke="none"><rect x="1894.5" y="534.8" width="1.500" height="1.500"/><rect x="1894.5" y="537.8" width="1.500" height="1.500"/><rect x="1897.9" y="534.8" width="1.500" height="1.500"/><rect x="1897.9" y="537.8" width="1.500" height="1.500"/><rect x="1901.3" y="534.8" width="1.500" height="1.500"/><rect x="1901.3" y="537.8" width="1.500" height="1.500"/><rect x="1904.7" y="534.8" width="1.500" height="1.500"/><rect x="1904.7" y="537.8" width="1.500" height="1.500"/></g>
<path d="M1632.300 644.5 L1636.500 648.7 L1640.700 644.5" stroke="#d0d0d0" stroke-width="1.200"/>
<g fill="#6a6a6a" stroke="none"><rect x="1894.5" y="644.8" width="1.500" height="1.500"/><rect x="1894.5" y="647.8" width="1.500" height="1.500"/><rect x="1897.9" y="644.8" width="1.500" height="1.500"/><rect x="1897.9" y="647.8" width="1.500" height="1.500"/><rect x="1901.3" y="644.8" width="1.500" height="1.500"/><rect x="1901.3" y="647.8" width="1.500" height="1.500"/><rect x="1904.7" y="644.8" width="1.500" height="1.500"/><rect x="1904.7" y="647.8" width="1.500" height="1.500"/></g>
<path d="M1632.300 927.5 L1636.500 931.7 L1640.700 927.5" stroke="#d0d0d0" stroke-width="1.200"/>
<g fill="#6a6a6a" stroke="none"><rect x="1894.5" y="927.8" width="1.500" height="1.500"/><rect x="1894.5" y="930.8" width="1.500" height="1.500"/><rect x="1897.9" y="927.8" width="1.500" height="1.500"/><rect x="1897.9" y="930.8" width="1.500" height="1.500"/><rect x="1901.3" y="927.8" width="1.500" height="1.500"/><rect x="1901.3" y="930.8" width="1.500" height="1.500"/><rect x="1904.7" y="927.8" width="1.500" height="1.500"/><rect x="1904.7" y="930.8" width="1.500" height="1.500"/></g>
<path d="M1635.500 988 L1639.500 992.200 L1635.500 996.400" stroke="#d0d0d0" stroke-width="1.200"/>
<g fill="#6a6a6a" stroke="none"><rect x="1894.5" y="990" width="1.500" height="1.500"/><rect x="1894.5" y="993" width="1.500" height="1.500"/><rect x="1897.9" y="990" width="1.500" height="1.500"/><rect x="1897.9" y="993" width="1.500" height="1.500"/><rect x="1901.3" y="990" width="1.500" height="1.500"/><rect x="1901.3" y="993" width="1.500" height="1.500"/><rect x="1904.7" y="990" width="1.500" height="1.500"/><rect x="1904.7" y="993" width="1.500" height="1.500"/></g>
<path d="M1649.300 898.800 L1653.300 903 L1649.300 907.200" stroke="#d0d0d0" stroke-width="1.200"/>
<rect x="1872.200" y="676.0" width="8" height="5.600" rx="0.800" stroke="#b8b8b8" stroke-width="1"/><rect x="1875.400" y="678.0" width="1.600" height="1.800" fill="#b8b8b8" stroke="none"/><path d="M1873.800 675.8 V673.8 A2.200 2.200 0 0 0 1869.400 673.9" stroke="#b8b8b8" stroke-width="1"/>
<rect x="1872.200" y="695.7" width="8" height="5.600" rx="0.800" stroke="#b8b8b8" stroke-width="1"/><rect x="1875.400" y="697.7" width="1.600" height="1.800" fill="#b8b8b8" stroke="none"/><path d="M1873.800 695.5 V693.5 A2.200 2.200 0 0 0 1869.400 693.6" stroke="#b8b8b8" stroke-width="1"/>
<rect x="1872.200" y="715.7" width="8" height="5.600" rx="0.800" stroke="#b8b8b8" stroke-width="1"/><rect x="1875.400" y="717.7" width="1.600" height="1.800" fill="#b8b8b8" stroke="none"/><path d="M1873.800 715.5 V713.5 A2.200 2.200 0 0 0 1869.400 713.6" stroke="#b8b8b8" stroke-width="1"/>
<rect x="1872.200" y="741.0" width="8" height="5.600" rx="0.800" stroke="#b8b8b8" stroke-width="1"/><rect x="1875.400" y="743.0" width="1.600" height="1.800" fill="#b8b8b8" stroke="none"/><path d="M1873.800 740.8 V738.8 A2.200 2.200 0 0 0 1869.400 738.9" stroke="#b8b8b8" stroke-width="1"/>
<rect x="1872.200" y="760.7" width="8" height="5.600" rx="0.800" stroke="#b8b8b8" stroke-width="1"/><rect x="1875.400" y="762.7" width="1.600" height="1.800" fill="#b8b8b8" stroke="none"/><path d="M1873.800 760.5 V758.5 A2.200 2.200 0 0 0 1869.400 758.6" stroke="#b8b8b8" stroke-width="1"/>
<rect x="1872.200" y="780.7" width="8" height="5.600" rx="0.800" stroke="#b8b8b8" stroke-width="1"/><rect x="1875.400" y="782.7" width="1.600" height="1.800" fill="#b8b8b8" stroke="none"/><path d="M1873.800 780.5 V778.5 A2.200 2.200 0 0 0 1869.400 778.6" stroke="#b8b8b8" stroke-width="1"/>
<rect x="1872.200" y="831.0" width="8" height="5.600" rx="0.800" stroke="#b8b8b8" stroke-width="1"/><rect x="1875.400" y="833.0" width="1.600" height="1.800" fill="#b8b8b8" stroke="none"/><path d="M1873.800 830.8 V828.8 A2.200 2.200 0 0 0 1869.400 828.9" stroke="#b8b8b8" stroke-width="1"/>
<rect x="1872.200" y="850.7" width="8" height="5.600" rx="0.800" stroke="#b8b8b8" stroke-width="1"/><rect x="1875.400" y="852.7" width="1.600" height="1.800" fill="#b8b8b8" stroke="none"/><path d="M1873.800 850.5 V848.5 A2.200 2.200 0 0 0 1869.400 848.6" stroke="#b8b8b8" stroke-width="1"/>
<rect x="1872.200" y="870.7" width="8" height="5.600" rx="0.800" stroke="#b8b8b8" stroke-width="1"/><rect x="1875.400" y="872.7" width="1.600" height="1.800" fill="#b8b8b8" stroke="none"/><path d="M1873.800 870.5 V868.5 A2.200 2.200 0 0 0 1869.400 868.6" stroke="#b8b8b8" stroke-width="1"/>
<circle cx="1894" cy="677.3" r="1.800" fill="#e0e0e0" stroke="none"/>
<circle cx="1894" cy="697" r="1.800" fill="#e0e0e0" stroke="none"/>
<circle cx="1894" cy="717" r="1.800" fill="#e0e0e0" stroke="none"/>
<circle cx="1894" cy="742.3" r="1.800" fill="#e0e0e0" stroke="none"/>
<circle cx="1894" cy="762" r="1.800" fill="#e0e0e0" stroke="none"/>
<circle cx="1894" cy="782" r="1.800" fill="#e0e0e0" stroke="none"/>
<circle cx="1894" cy="807" r="1.800" fill="#e0e0e0" stroke="none"/>
<circle cx="1894" cy="832.3" r="1.800" fill="#e0e0e0" stroke="none"/>
<circle cx="1894" cy="852" r="1.800" fill="#e0e0e0" stroke="none"/>
<circle cx="1894" cy="872" r="1.800" fill="#e0e0e0" stroke="none"/>
<path d="M1853 805.800 L1856 808.800 L1859 805.800" stroke-width="1.300"/>
<circle cx="1644.500" cy="614" r="5.300" fill="#e6e6e6" stroke="none"/><path d="M1641.500 614 H1647.500 M1644.500 611 V617" stroke="#545454" stroke-width="1.200"/>
<path d="M1889.500 611.500 H1897.500 L1893.500 617.500 Z" fill="#e6e6e6" stroke="none"/>
<g stroke="#b6b6b6" stroke-width="1.300"><path d="M1598.500 380.500 V386"/><path d="M1596.800 389.500 A2 2.300 0 1 0 1600.400 389.500 L1600 386.500 H1597.200 Z" fill="#b6b6b6" stroke-width="0.600"/><path d="M1606.500 385.500 V392.500" stroke-width="1.800"/><path d="M1603.800 380.800 V383.200 A2.700 2.700 0 0 0 1609.200 383.200 V380.800" stroke-width="1.500"/></g>
<g stroke="#b6b6b6" stroke-width="1.200"><rect x="1596.800" y="419.500" width="12.500" height="8" rx="1"/><path d="M1600 419 V417.200 H1604.500 V419 M1607 416.800 L1609 417.800"/><path d="M1599 422.500 H1604.500 M1599 425 H1604.500" stroke-width="0.900"/><circle cx="1607" cy="422.500" r="0.700" fill="#b6b6b6"/></g>
<g fill="#b6b6b6" stroke="none"><path d="M1596.300 444.800 H1609.700 V449.500 H1607.800 V447.500 H1598.200 V449.500 H1596.300 Z"/><path d="M1599 449 H1607 V457.300 H1599 Z M1600.300 455.800 L1602.800 452 L1604.300 454 L1605 453.200 L1606 455.800 Z" fill-rule="evenodd"/></g>
<g stroke="#b6b6b6" stroke-width="1.100"><path d="M1597 476 V485 H1606 M1599 474 V483 H1608"/><rect x="1601" y="472" width="9" height="9" fill="#b6b6b6" stroke="none"/><path d="M1602 480 L1604.800 475.500 L1606.500 478 L1607.500 477 L1609 480 Z" fill="#1f1f1f" stroke="none"/><circle cx="1607.800" cy="474.300" r="0.900" fill="#1f1f1f" stroke="none"/></g>
<g><path d="M1597 511.500 L1600.800 500.500 L1604 508 Q1601 509 1601.500 511.500 Z" fill="#b6b6b6" stroke="none"/><circle cx="1606" cy="511" r="3.200" stroke="#b6b6b6" stroke-width="1.200"/><circle cx="1607.500" cy="502.500" r="1.800" fill="#b6b6b6" stroke="none"/></g>
<g stroke="#b8506a" stroke-width="1.200"><circle cx="1602.700" cy="535" r="5.800"/><path d="M1599.500 531 Q1602 533 1600.500 535.500 Q1603 537 1602 540 M1605 530.500 Q1604 533.500 1607.500 534.500" stroke-width="1.200"/><path d="M1596.500 541.500 Q1602 543.500 1608.500 540.500 M1608.500 528.500 L1610 527"/></g>
<g stroke="#b6b6b6" stroke-width="1.200"><rect x="1596.800" y="565.800" width="12" height="3"/><path d="M1597.800 569 V577 H1607.800 V569"/><path d="M1601 572 H1604.600"/></g>
<g transform="translate(1602.7,607) scale(0.98)" stroke="#e8943c"><rect x="-3.800" y="-3.800" width="7.600" height="7.600" fill="#e8943c" stroke="none"/><path d="M-6.500 -3.500 V-6.500 H-3.500 M3.500 -6.500 H6.500 V-3.500 M6.500 3.500 V6.500 H3.500 M-3.500 6.500 H-6.500 V3.500"/></g>
<path d="M1597.500 642.500 L1603.500 636 A3.600 3.600 0 0 1 1608.300 631.200 L1605.800 633.800 L1606.800 635.800 L1608.800 635 L1610 633 A3.600 3.600 0 0 1 1605.500 638 L1599.500 644.500 Z" fill="#5880c8" stroke="none"/>
<g stroke="#5880c8" stroke-width="1.100" fill="#5880c8"><circle cx="1598.500" cy="658" r="1.700"/><circle cx="1608" cy="657.500" r="1.300"/><circle cx="1598.500" cy="669" r="1.200"/><circle cx="1607.500" cy="668" r="1.700"/><path d="M1598.500 658 L1607.500 668 M1598.500 658 V669 M1600 658 L1608 657.500" fill="none"/></g>
<g stroke="#5880c8" stroke-width="1.200"><path d="M1607.500 695 A6 6 0 1 1 1605.500 685.700"/><circle cx="1602.500" cy="691.300" r="2.500" fill="#5880c8" stroke="none"/><circle cx="1608.300" cy="686" r="1.300" fill="#5880c8" stroke="none"/></g>
<g stroke="#5880c8" stroke-width="1.300"><path d="M1597.300 722.500 Q1596 717.500 1601.500 715.500 L1607 712.500 Q1610.500 712 1610 715.500 L1607 722 Q1604 726.500 1599.500 725 Q1597.800 724.300 1597.300 722.500 Z"/><circle cx="1601.800" cy="720.500" r="2.200"/><circle cx="1601.800" cy="720.500" r="0.500"/></g>
<g stroke="#2cc595" stroke-width="1.200"><path d="M1598.300 741.500 H1607.200 M1597.800 743.500 L1601.800 751 M1607.700 743.500 L1603.700 751"/><rect x="1595.800" y="739.800" width="2.800" height="2.800"/><rect x="1607" y="739.800" width="2.800" height="2.800"/><rect x="1601.300" y="751" width="2.800" height="2.800"/></g>
<g stroke="#a8a8a8" stroke-width="1.300"><path d="M1604.500 774.500 H1600 Q1597 774.500 1597 777.500 Q1597 780.500 1600 780.500 M1601 776.500 H1605.500 Q1608.500 776.500 1608.500 773.500 Q1608.500 770.500 1605.500 770.500 H1603.500 Q1600.500 770.500 1600.500 772.500 M1604.500 778.500 Q1604.500 780.800 1602 780.800"/></g>
<g stroke="#a8a8a8" stroke-width="1.300"></g>
<g><circle cx="1602.700" cy="803" r="6" fill="#c05868" stroke="none"/><path d="M1602.700 803 L1602.700 797 A6 6 0 0 1 1608.700 803 Z M1602.700 803 L1602.700 809 A6 6 0 0 1 1596.700 803 Z" fill="#1f1f1f" stroke="none" opacity="0.850"/><circle cx="1602.700" cy="803" r="6" stroke="#c05868" stroke-width="1"/></g>
</svg>


<!-- timeline -->
<div class="a" style="left:0;top:925px;width:1585px;height:72px;background:#2a2a2a;border-radius:5px"></div>
<div class="a" style="left:0;top:925px;width:1585px;height:25px;background:#303030;border-radius:5px 5px 0 0"></div>
<div class="a" style="left:0;top:950px;width:1585px;height:23px;background:#1d1d1d"></div>
<div class="a" style="left:58.9px;top:972.500px;width:1467.4px;height:24.500px;background:#303030"></div>
<div class="b" style="left:9.500px;top:928.500px;width:30.500px;height:19px;background:#2e2e2e;border:1px solid #444"></div>
<div class="a" style="left:46px;top:928.500px;width:118.500px;height:19px;background:#2b2b2b;border:1px solid #3f3f3f;border-radius:3px 0 0 3px"></div>
<div class="a" style="left:164px;top:928.500px;width:57px;height:19px;background:#2b2b2b;border:1px solid #3f3f3f;border-radius:0 3px 3px 0"></div>
<div class="t" style="left:52.500px;top:931px">Воспроизведение</div>
<div class="t" style="left:171.500px;top:931px">Кеинг</div>
<div class="t" style="left:231.500px;top:931px">Вид</div>
<div class="t" style="left:266.500px;top:931px">Маркер</div>
<div class="a" style="left:700.500px;top:929px;width:19px;height:18px;background:#545454;border-radius:3px 0 0 3px"></div>
<div class="a" style="left:720px;top:929px;width:19px;height:18px;background:#2c2c2c;border:1px solid #383838;border-radius:0 3px 3px 0"></div>
<div class="a" style="left:746.00px;top:929px;width:19.100px;height:18px;background:#545454;border-radius:3px 0 0 3px"></div>
<div class="a" style="left:765.67px;top:929px;width:19.100px;height:18px;background:#545454;border-radius:0"></div>
<div class="a" style="left:785.34px;top:929px;width:19.100px;height:18px;background:#545454;border-radius:0"></div>
<div class="a" style="left:805.01px;top:929px;width:19.100px;height:18px;background:#545454;border-radius:0"></div>
<div class="a" style="left:824.68px;top:929px;width:19.100px;height:18px;background:#545454;border-radius:0"></div>
<div class="a" style="left:844.35px;top:929px;width:19.100px;height:18px;background:#545454;border-radius:0 3px 3px 0"></div>
<div class="b" style="left:1283px;top:929px;width:73.500px;height:18px;background:#545454"></div>
<div class="t" style="left:1283px;width:73.500px;text-align:center;top:931px">0</div>
<div class="a" style="left:1362.500px;top:929px;width:19.500px;height:18px;background:#5a5a5a;border-radius:3px 0 0 3px"></div>
<div class="a" style="left:1382.500px;top:929px;width:98.500px;height:18px;background:#545454"></div>
<div class="a" style="left:1481.500px;top:929px;width:96px;height:18px;background:#545454;border-radius:0 3px 3px 0"></div>
<div class="t" style="left:1396.500px;top:931px">Начало</div><div class="t" style="left:1460.500px;top:931px">1</div>
<div class="t" style="left:1496.500px;top:931px">Конец</div><div class="t" style="left:1542.500px;top:931px">250</div>
<div class="t" style="left:90.9px;width:40px;text-align:center;top:955.500px;color:#b4b4b4;font-size:11px">10</div>
<div class="t" style="left:149.9px;width:40px;text-align:center;top:955.500px;color:#b4b4b4;font-size:11px">20</div>
<div class="t" style="left:208.8px;width:40px;text-align:center;top:955.500px;color:#b4b4b4;font-size:11px">30</div>
<div class="t" style="left:267.7px;width:40px;text-align:center;top:955.500px;color:#b4b4b4;font-size:11px">40</div>
<div class="t" style="left:326.6px;width:40px;text-align:center;top:955.500px;color:#b4b4b4;font-size:11px">50</div>
<div class="t" style="left:385.6px;width:40px;text-align:center;top:955.500px;color:#b4b4b4;font-size:11px">60</div>
<div class="t" style="left:444.5px;width:40px;text-align:center;top:955.500px;color:#b4b4b4;font-size:11px">70</div>
<div class="t" style="left:503.4px;width:40px;text-align:center;top:955.500px;color:#b4b4b4;font-size:11px">80</div>
<div class="t" style="left:562.4px;width:40px;text-align:center;top:955.500px;color:#b4b4b4;font-size:11px">90</div>
<div class="t" style="left:621.3px;width:40px;text-align:center;top:955.500px;color:#b4b4b4;font-size:11px">100</div>
<div class="t" style="left:680.2px;width:40px;text-align:center;top:955.500px;color:#b4b4b4;font-size:11px">110</div>
<div class="t" style="left:739.2px;width:40px;text-align:center;top:955.500px;color:#b4b4b4;font-size:11px">120</div>
<div class="t" style="left:798.1px;width:40px;text-align:center;top:955.500px;color:#b4b4b4;font-size:11px">130</div>
<div class="t" style="left:857.0px;width:40px;text-align:center;top:955.500px;color:#b4b4b4;font-size:11px">140</div>
<div class="t" style="left:915.9px;width:40px;text-align:center;top:955.500px;color:#b4b4b4;font-size:11px">150</div>
<div class="t" style="left:974.9px;width:40px;text-align:center;top:955.500px;color:#b4b4b4;font-size:11px">160</div>
<div class="t" style="left:1033.8px;width:40px;text-align:center;top:955.500px;color:#b4b4b4;font-size:11px">170</div>
<div class="t" style="left:1092.7px;width:40px;text-align:center;top:955.500px;color:#b4b4b4;font-size:11px">180</div>
<div class="t" style="left:1151.7px;width:40px;text-align:center;top:955.500px;color:#b4b4b4;font-size:11px">190</div>
<div class="t" style="left:1210.6px;width:40px;text-align:center;top:955.500px;color:#b4b4b4;font-size:11px">200</div>
<div class="t" style="left:1269.5px;width:40px;text-align:center;top:955.500px;color:#b4b4b4;font-size:11px">210</div>
<div class="t" style="left:1328.5px;width:40px;text-align:center;top:955.500px;color:#b4b4b4;font-size:11px">220</div>
<div class="t" style="left:1387.4px;width:40px;text-align:center;top:955.500px;color:#b4b4b4;font-size:11px">230</div>
<div class="t" style="left:1446.3px;width:40px;text-align:center;top:955.500px;color:#b4b4b4;font-size:11px">240</div>
<div class="t" style="left:1505.2px;width:40px;text-align:center;top:955.500px;color:#b4b4b4;font-size:11px">250</div>
<svg width="1600" height="1018" viewBox="0 0 1600 1018" fill="none">
<path d="M23.5 972.500 V997" stroke="#272727" stroke-width="1"/>
<path d="M53.0 972.500 V997" stroke="#1c1c1c" stroke-width="1"/>
<path d="M82.5 972.500 V997" stroke="#272727" stroke-width="1"/>
<path d="M111.9 972.500 V997" stroke="#1c1c1c" stroke-width="1"/>
<path d="M141.4 972.500 V997" stroke="#272727" stroke-width="1"/>
<path d="M170.9 972.500 V997" stroke="#1c1c1c" stroke-width="1"/>
<path d="M200.3 972.500 V997" stroke="#272727" stroke-width="1"/>
<path d="M229.8 972.500 V997" stroke="#1c1c1c" stroke-width="1"/>
<path d="M259.3 972.500 V997" stroke="#272727" stroke-width="1"/>
<path d="M288.7 972.500 V997" stroke="#1c1c1c" stroke-width="1"/>
<path d="M318.2 972.500 V997" stroke="#272727" stroke-width="1"/>
<path d="M347.6 972.500 V997" stroke="#1c1c1c" stroke-width="1"/>
<path d="M377.1 972.500 V997" stroke="#272727" stroke-width="1"/>
<path d="M406.6 972.500 V997" stroke="#1c1c1c" stroke-width="1"/>
<path d="M436.0 972.500 V997" stroke="#272727" stroke-width="1"/>
<path d="M465.5 972.500 V997" stroke="#1c1c1c" stroke-width="1"/>
<path d="M495.0 972.500 V997" stroke="#272727" stroke-width="1"/>
<path d="M524.4 972.500 V997" stroke="#1c1c1c" stroke-width="1"/>
<path d="M553.9 972.500 V997" stroke="#272727" stroke-width="1"/>
<path d="M583.4 972.500 V997" stroke="#1c1c1c" stroke-width="1"/>
<path d="M612.8 972.500 V997" stroke="#272727" stroke-width="1"/>
<path d="M642.3 972.500 V997" stroke="#1c1c1c" stroke-width="1"/>
<path d="M671.8 972.500 V997" stroke="#272727" stroke-width="1"/>
<path d="M701.2 972.500 V997" stroke="#1c1c1c" stroke-width="1"/>
<path d="M730.7 972.500 V997" stroke="#272727" stroke-width="1"/>
<path d="M760.2 972.500 V997" stroke="#1c1c1c" stroke-width="1"/>
<path d="M789.6 972.500 V997" stroke="#272727" stroke-width="1"/>
<path d="M819.1 972.500 V997" stroke="#1c1c1c" stroke-width="1"/>
<path d="M848.6 972.500 V997" stroke="#272727" stroke-width="1"/>
<path d="M878.0 972.500 V997" stroke="#1c1c1c" stroke-width="1"/>
<path d="M907.5 972.500 V997" stroke="#272727" stroke-width="1"/>
<path d="M936.9 972.500 V997" stroke="#1c1c1c" stroke-width="1"/>
<path d="M966.4 972.500 V997" stroke="#272727" stroke-width="1"/>
<path d="M995.9 972.500 V997" stroke="#1c1c1c" stroke-width="1"/>
<path d="M1025.3 972.500 V997" stroke="#272727" stroke-width="1"/>
<path d="M1054.8 972.500 V997" stroke="#1c1c1c" stroke-width="1"/>
<path d="M1084.3 972.500 V997" stroke="#272727" stroke-width="1"/>
<path d="M1113.7 972.500 V997" stroke="#1c1c1c" stroke-width="1"/>
<path d="M1143.2 972.500 V997" stroke="#272727" stroke-width="1"/>
<path d="M1172.7 972.500 V997" stroke="#1c1c1c" stroke-width="1"/>
<path d="M1202.1 972.500 V997" stroke="#272727" stroke-width="1"/>
<path d="M1231.6 972.500 V997" stroke="#1c1c1c" stroke-width="1"/>
<path d="M1261.1 972.500 V997" stroke="#272727" stroke-width="1"/>
<path d="M1290.5 972.500 V997" stroke="#1c1c1c" stroke-width="1"/>
<path d="M1320.0 972.500 V997" stroke="#272727" stroke-width="1"/>
<path d="M1349.5 972.500 V997" stroke="#1c1c1c" stroke-width="1"/>
<path d="M1378.9 972.500 V997" stroke="#272727" stroke-width="1"/>
<path d="M1408.4 972.500 V997" stroke="#1c1c1c" stroke-width="1"/>
<path d="M1437.9 972.500 V997" stroke="#272727" stroke-width="1"/>
<path d="M1467.3 972.500 V997" stroke="#1c1c1c" stroke-width="1"/>
<path d="M1496.8 972.500 V997" stroke="#272727" stroke-width="1"/>
<path d="M1526.2 972.500 V997" stroke="#1c1c1c" stroke-width="1"/>
<path d="M1555.7 972.500 V997" stroke="#272727" stroke-width="1"/>
<path d="M58.9 972.500 V997" stroke="#0d0d0d" stroke-width="1.300"/>
<path d="M1526.2 972.500 V997" stroke="#0d0d0d" stroke-width="1.300"/>
<rect x="9.500" y="986.800" width="1566.500" height="7.800" rx="3.900" fill="#535353"/>
<circle cx="13.500" cy="990.700" r="2.300" fill="#3a3a3a" stroke="#2a2a2a" stroke-width="0.800"/><circle cx="1572" cy="990.700" r="2.300" fill="#3a3a3a" stroke="#2a2a2a" stroke-width="0.800"/>
<path d="M53 968 V997" stroke="#4772b3" stroke-width="2"/>
<rect x="42" y="953.400" width="23" height="16.200" rx="3" fill="#4772b3"/>
<circle cx="19.800" cy="937.800" r="6.800" fill="#e6e6e6"/><path d="M21.500 933.500 L18.300 938 L21 942" stroke="#303030" stroke-width="1.700" stroke-linecap="round" stroke-linejoin="round"/>
<g stroke="#e6e6e6" stroke-width="1.300" stroke-linecap="round" stroke-linejoin="round"><path d="M30.500 936.500 L33.500 939.500 L36.500 936.500"/><path d="M155.500 936.500 L158.500 939.500 L161.500 936.500"/><path d="M212.300 936.500 L215.300 939.500 L218.300 936.500"/></g>
<circle cx="710" cy="938" r="3.800" fill="#e6e6e6"/><path d="M726.500 936.800 L729.300 939.600 L732.100 936.800" stroke="#555" stroke-width="1.200"/>
<rect x="750.835" y="933.5" width="1.800" height="9" fill="#e6e6e6"/><path d="M760.0350000000001 933.5 L754.0350000000001 938 L760.0350000000001 942.5 Z" fill="#e6e6e6"/>
<path d="M769.505 938 L772.805 933.8 L776.105 938 L772.805 942.2 Z" fill="#e6e6e6"/><path d="M781.755 934.0 L777.255 938 L781.755 942.0 Z" fill="#e6e6e6"/>
<path d="M799.175 932.5 L791.175 938 L799.175 943.5 Z" fill="#e6e6e6"/>
<path d="M810.845 932.5 L818.845 938 L810.845 943.5 Z" fill="#e6e6e6"/>
<path d="M828.265 934.0 L832.765 938 L828.265 942.0 Z" fill="#e6e6e6"/><path d="M840.515 938 L837.215 933.8 L833.915 938 L837.215 942.2 Z" fill="#e6e6e6"/>
<path d="M849.9849999999999 933.5 L855.9849999999999 938 L849.9849999999999 942.5 Z" fill="#e6e6e6"/><rect x="857.385" y="933.5" width="1.800" height="9" fill="#e6e6e6"/>
<g stroke="#e6e6e6" stroke-width="1.100" fill="none" stroke-linecap="round"><circle cx="1372" cy="938.800" r="5.300"/><path d="M1372 935.800 V938.800 H1374.300 M1370.500 931.800 H1373.500 M1376.300 933.500 L1377.300 932.500"/></g>
<path d="M1.500 968 L5.500 972 L1.500 976" stroke="#a0a0a0" stroke-width="1.200" fill="none"/>
<path d="M1583.500 967.300 L1579.500 971.300 L1583.500 975.300" stroke="#b4b4b4" stroke-width="1.200" fill="none"/>
<rect x="1580.300" y="960" width="2.600" height="27" rx="1.300" fill="#383838"/>
</svg>
<div class="t" style="left:32.300px;width:40px;text-align:center;top:955.500px;color:#fff;font-size:11px">0</div>

<div class="a" style="left:0;top:998px;width:1920px;height:20px;background:#1d1d1d"></div>
<div class="t" style="left:33.500px;top:1001px;color:#a6a6a6">Выделить</div>
<div class="t" style="left:244.500px;top:1001px;color:#a6a6a6">Повернуть вид</div>
<div class="t" style="left:455.500px;top:1001px;color:#a6a6a6">Вызвать меню</div>
<div class="t" style="left:1200px;width:1708.500px;text-align:right;top:1001px;color:#a6a6a6;left:200px;letter-spacing:-0.222px">Cube | Вершин:16/88 | Рёбер:16/168 | Граней:4/84 | Треуг.:168 | Objects:1/3 | UPBGE 0.36.1 (based on Blender 3.6.2)</div>
<svg width="1920" height="1018" viewBox="0 0 1920 1018" fill="none" stroke="#a6a6a6" stroke-width="1.100">
<rect x="12.5" y="1001.500" width="9.500" height="14" rx="3.500"/>
<path d="M12.5 1008 V1005 Q12.5 1001.500 17.0 1001.500 V1008 Z" fill="#a6a6a6" stroke="none"/>
<rect x="223.5" y="1001.500" width="9.500" height="14" rx="3.500"/>
<rect x="227.0" y="1003" width="2.500" height="4.500" rx="1" fill="#a6a6a6" stroke="none"/>
<rect x="435.5" y="1001.500" width="9.500" height="14" rx="3.500"/>
<path d="M445.0 1008 V1005 Q445.0 1001.500 440.5 1001.500 V1008 Z" fill="#a6a6a6" stroke="none"/>
</svg>

</div>
</body>
</html>
